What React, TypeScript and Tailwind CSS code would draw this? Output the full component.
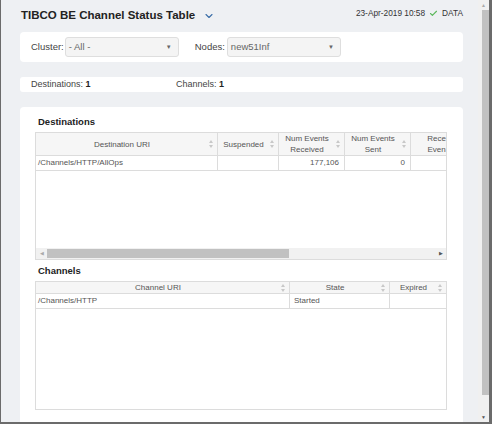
import { Check, ChevronDown } from "lucide-react";

function SortIcon() {
  return (
    <svg width="4" height="8" viewBox="0 0 4 8" className="shrink-0">
      <path d="M2 0 L4 3 L0 3 Z" fill="#c8c8c8" />
      <path d="M2 8 L4 5 L0 5 Z" fill="#c8c8c8" />
    </svg>
  );
}

function HeadCell({ label, w, last }: { label: React.ReactNode; w: string; last?: boolean }) {
  return (
    <div
      className={`${w} flex items-center justify-center gap-[5px] px-1 ${last ? "" : "border-r border-[#dcdcdc]"} text-center leading-[11px] text-[#555]`}
    >
      <span className="flex-1 text-center">{label}</span>
      <SortIcon />
    </div>
  );
}

function App() {
  return (
    <div className="w-[492px] h-[424px] flex border-l border-r-[3px] border-b-2 border-[#6b6b6b] bg-[#eef0f3] font-['Liberation_Sans',Arial,sans-serif] overflow-hidden">
      <div className="flex-1 flex flex-col pl-[19px] pr-[15px]">
        <div className="h-[32px] flex items-center justify-between">
          <div className="flex items-center gap-[8px] pl-[1px]">
            <span className="text-[11.5px] font-bold text-[#222]">TIBCO BE Channel Status Table</span>
            <ChevronDown size={12} strokeWidth={2.2} className="text-[#3a6da8]" />
          </div>
          <div className="flex items-center gap-[2px] text-[8.3px] text-[#333] mb-[6px]">
            <span>23-Apr-2019 10:58</span>
            <Check size={9} strokeWidth={3} className="text-[#5cb85c] mx-[2px]" />
            <span>DATA</span>
          </div>
        </div>

        <div className="h-[30px] bg-white rounded-[4px] flex items-center pl-[11px] text-[9.5px] text-[#444]">
          <span className="mr-[1px]">Cluster:</span>
          <div className="w-[114px] h-[20px] bg-[#f4f4f4] border border-[#dedede] rounded-[3px] flex items-center justify-between pl-[3px] pr-[6px] text-[#666]">
            <span>- All -</span>
            <span className="text-[6px] text-[#666]">▼</span>
          </div>
          <span className="ml-[16px] mr-[2px]">Nodes:</span>
          <div className="w-[114px] h-[20px] bg-[#f4f4f4] border border-[#dedede] rounded-[3px] flex items-center justify-between pl-[3px] pr-[6px] text-[#666]">
            <span>new51Inf</span>
            <span className="text-[6px] text-[#666]">▼</span>
          </div>
        </div>

        <div className="mt-[15px] h-[15px] bg-white rounded-[3px] flex items-center pl-[11px] text-[9px] text-[#444]">
          <span className="w-[145px]">
            Destinations: <b className="text-[#222]">1</b>
          </span>
          <span>
            Channels: <b className="text-[#222]">1</b>
          </span>
        </div>

        <div className="mt-[15px] flex-1 bg-white rounded-t-[4px] pl-[15px] pr-[16px] flex flex-col">
          <div className="h-[25px] flex items-end pb-[3px] pl-[3px] text-[9.5px] font-bold text-[#222]">Destinations</div>
          <div className="h-[128px] border border-[#dcdcdc] flex flex-col text-[8px] overflow-hidden">
            <div className="h-[23px] flex bg-[#f6f6f6] border-b border-[#dcdcdc]">
              <HeadCell w="w-[182px]" label="Destination URI" />
              <HeadCell w="w-[61px]" label="Suspended" />
              <HeadCell w="w-[66px]" label={<>Num Events<br />Received</>} />
              <HeadCell w="w-[66px]" label={<>Num Events<br />Sent</>} />
              <div className="flex-1 flex items-center justify-end overflow-hidden leading-[11px] text-[#555] whitespace-nowrap">
                <span className="text-center">Rece<br />Even</span>
              </div>
            </div>
            <div className="h-[15px] flex border-b border-[#dcdcdc] text-[#555]">
              <div className="w-[182px] border-r border-[#dcdcdc] px-[2px] flex items-center">/Channels/HTTP/AllOps</div>
              <div className="w-[61px] border-r border-[#dcdcdc]"></div>
              <div className="w-[66px] border-r border-[#dcdcdc] flex items-center justify-end pr-[5px]">177,106</div>
              <div className="w-[66px] border-r border-[#dcdcdc] flex items-center justify-end pr-[5px]">0</div>
              <div className="flex-1"></div>
            </div>
            <div className="flex-1"></div>
            <div className="h-[11px] bg-[#f1f1f1] flex items-center">
              <span className="w-[11px] text-center text-[5px] text-[#aaa]">◀</span>
              <div className="w-[242px] h-[9px] bg-[#c1c1c1]"></div>
              <div className="flex-1"></div>
              <span className="w-[11px] text-center text-[5px] text-[#555]">▶</span>
            </div>
          </div>

          <div className="h-[21px] flex items-end pb-[3px] pl-[3px] text-[9.5px] font-bold text-[#222]">Channels</div>
          <div className="h-[129px] border border-[#dcdcdc] flex flex-col text-[8px]">
            <div className="h-[12px] flex bg-[#f6f6f6] border-b border-[#dcdcdc]">
              <HeadCell w="w-[254px]" label="Channel URI" />
              <HeadCell w="w-[100px]" label="State" />
              <HeadCell w="flex-1" label="Expired" last />
            </div>
            <div className="h-[15px] flex border-b border-[#dcdcdc] text-[#555]">
              <div className="w-[254px] border-r border-[#dcdcdc] px-[2px] flex items-center">/Channels/HTTP</div>
              <div className="w-[100px] border-r border-[#dcdcdc] px-[4px] flex items-center">Started</div>
              <div className="flex-1"></div>
            </div>
          </div>
        </div>
      </div>

      <div className="w-[11px] bg-[#f0f0f0] flex flex-col items-center">
        <span className="h-[10px] text-[5px] text-[#aaa] leading-[10px]">▲</span>
        <div className="w-[7px] ml-[3px] h-[385px] bg-[#c1c1c1]"></div>
        <div className="flex-1"></div>
        <span className="h-[10px] text-[5px] text-[#555] leading-[10px]">▼</span>
      </div>
    </div>
  );
}

export default App;
